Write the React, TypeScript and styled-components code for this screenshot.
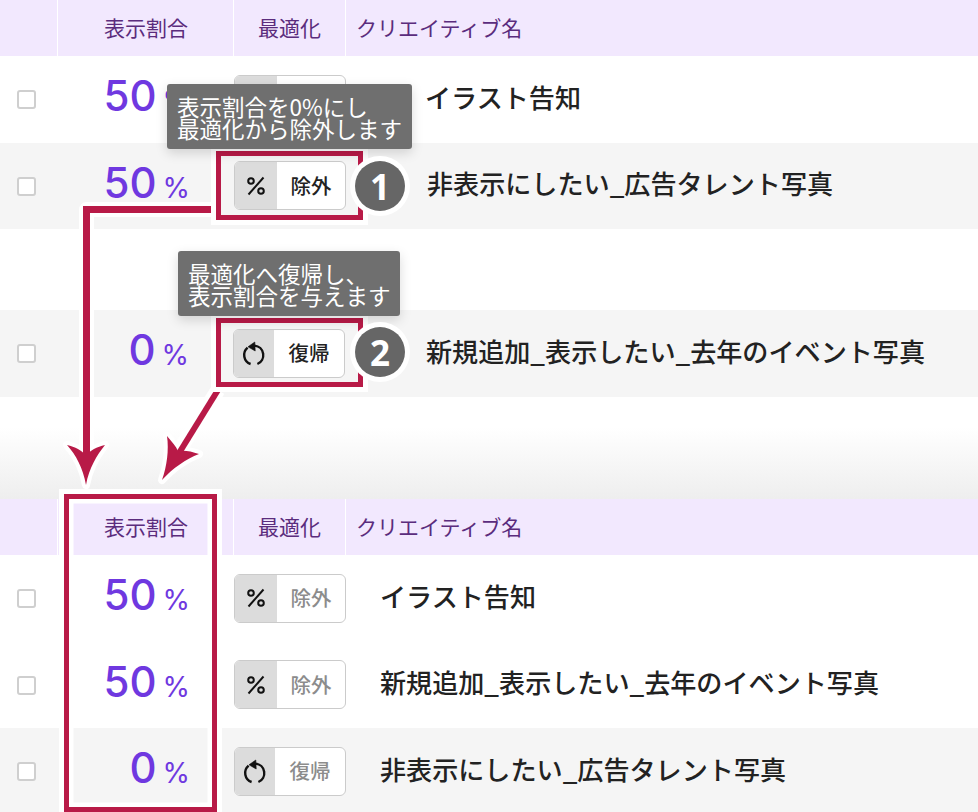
import styled, { createGlobalStyle } from "styled-components";

const Global = createGlobalStyle`
  html, body { margin: 0; padding: 0; background: #fff; }
  body { font-family: "Noto Sans CJK JP", "Noto Sans", sans-serif; }
`;

const Page = styled.div`
  position: relative;
  width: 978px;
  height: 812px;
  overflow: hidden;
  background: #fff;
`;

const HeaderRow = styled.div`
  display: grid;
  grid-template-columns: 57px 176px 112px 1fr;
  height: 56px;
  background: #f2e8fe;
`;

const HeaderCell = styled.div<{ $center?: boolean; $pad?: number }>`
  display: flex;
  align-items: center;
  justify-content: ${(p) => (p.$center ? "center" : "flex-start")};
  padding: 0 0 2px ${(p) => p.$pad ?? 0}px;
  border-left: 1px solid #fff;
  font-size: 21px;
  color: #5b2c7d;
  box-sizing: border-box;
`;

const Row = styled.div<{ $shaded?: boolean; $lead?: number }>`
  display: grid;
  grid-template-columns: ${(p) => p.$lead ?? 57}px 176px 112px 1fr;
  height: 86.5px;
  align-items: center;
  background: ${(p) => (p.$shaded ? "#f5f5f5" : "#fff")};
`;

const CheckCell = styled.div`
  display: flex;
  padding-left: 17px;
`;

const Check = styled.span`
  display: block;
  width: 19px;
  height: 19px;
  box-sizing: border-box;
  border: 2px solid #cfcfcf;
  border-radius: 3px;
  background: #fff;
  margin-top: 1px;
`;

const Ratio = styled.div`
  display: flex;
  justify-content: flex-end;
  align-items: baseline;
  padding: 0 43px 6px 0;
  color: #6f38e0;
  font-family: Inter, "Noto Sans", sans-serif;
`;

const RatioValue = styled.span`
  font-size: 42px;
  font-weight: 500;
  line-height: 1;
`;

const RatioUnit = styled.span`
  font-size: 28px;
  margin-left: 6px;
  line-height: 1;
`;

const Toggle = styled.div`
  display: flex;
  width: 112px;
  height: 49px;
  margin-left: 1px;
  box-sizing: border-box;
  border: 1px solid #cbcbcb;
  border-radius: 6px;
  overflow: hidden;
  background: #fff;
`;

const ToggleIcon = styled.div<{ $wide?: number }>`
  display: flex;
  align-items: center;
  justify-content: center;
  width: ${(p) => p.$wide ?? 42}px;
  background: #dcdcdc;
`;

const ToggleLabel = styled.div<{ $active?: boolean }>`
  flex: 1;
  display: flex;
  align-items: center;
  justify-content: center;
  padding-bottom: 2px;
  font-size: 20.5px;
  font-weight: 500;
  color: ${(p) => (p.$active ? "#222" : "#8c8c8c")};
`;

const Name = styled.div<{ $indent: number }>`
  padding: 0 0 5px ${(p) => p.$indent}px;
  font-size: 26.1px;
  font-weight: 500;
  color: #222;
  white-space: nowrap;
`;

const Spacer = styled.div<{ $height: number; $fade?: boolean }>`
  height: ${(p) => p.$height}px;
  background: ${(p) =>
    p.$fade ? "linear-gradient(#fff 30%, #eeeeee 100%)" : "#fff"};
`;

const Arrows = styled.svg`
  position: absolute;
  left: 0;
  top: 0;
`;

const Frame = styled.div<{ $x: number; $y: number; $w: number; $h: number; $ring: number }>`
  position: absolute;
  left: ${(p) => p.$x}px;
  top: ${(p) => p.$y}px;
  width: ${(p) => p.$w}px;
  height: ${(p) => p.$h}px;
  box-sizing: border-box;
  border: 5px solid #b81a47;
  box-shadow: 0 0 0 5px #fff, inset 0 0 0 ${(p) => p.$ring}px #fff;
`;

const Bubble = styled.div<{ $x: number; $y: number; $w: number }>`
  position: absolute;
  left: ${(p) => p.$x}px;
  top: ${(p) => p.$y}px;
  width: ${(p) => p.$w}px;
  height: 65px;
  box-sizing: border-box;
  padding: 12px 0 0 10px;
  border-radius: 3px;
  background: #6f6f6f;
  color: #fff;
  font-size: 22.5px;
  line-height: 21.5px;
  white-space: nowrap;
  box-shadow: 0 4px 12px rgba(0, 0, 0, 0.15);
`;

const Badge = styled.div<{ $x: number; $y: number }>`
  position: absolute;
  left: ${(p) => p.$x}px;
  top: ${(p) => p.$y}px;
  width: 50px;
  height: 50px;
  display: flex;
  align-items: center;
  justify-content: center;
  border-radius: 50%;
  background: #666;
  box-shadow: 0 0 0 5px #fff;
  color: #fff;
  font-family: "Noto Sans", sans-serif;
  font-size: 35px;
  font-weight: 700;
  line-height: 1;
`;

function PercentIcon() {
  return (
    <svg width="20" height="20" viewBox="0 0 20 20" fill="none" stroke="#111" strokeWidth="2">
      <circle cx="5" cy="5" r="2.8" />
      <circle cx="15" cy="15" r="2.8" />
      <path d="M17.5 1.5 2.5 18.5" />
    </svg>
  );
}

function ResetIcon() {
  return (
    <svg width="24" height="26" viewBox="0 0 24 26" fill="none" stroke="#111" strokeWidth="2.4">
      <path d="M12.6 5.6A9.6 9.6 0 0 1 15.4 24" />
      <path d="M8.6 24A9.6 9.6 0 0 1 5.6 7.6" />
      <path d="M6 6.8 12.8 2 13.2 11Z" fill="#111" strokeWidth="0.6" />
    </svg>
  );
}

type Item = {
  value: number;
  restore?: boolean;
  active?: boolean;
  name: string;
  shaded?: boolean;
  indent: number;
  lead?: number;
};

const topRows: Item[] = [
  { value: 50, name: "イラスト告知", indent: 80 },
  { value: 50, name: "非表示にしたい_広告タレント写真", shaded: true, active: true, indent: 82 },
];
const topRestore: Item = {
  value: 0,
  restore: true,
  active: true,
  name: "新規追加_表示したい_去年のイベント写真",
  shaded: true,
  indent: 82,
  lead: 56,
};
const bottomRows: Item[] = [
  { value: 50, name: "イラスト告知", indent: 35 },
  { value: 50, name: "新規追加_表示したい_去年のイベント写真", indent: 35 },
  { value: 0, restore: true, name: "非表示にしたい_広告タレント写真", shaded: true, indent: 35 },
];

function TableHeader() {
  return (
    <HeaderRow>
      <div />
      <HeaderCell $pad={46}>表示割合</HeaderCell>
      <HeaderCell $center>最適化</HeaderCell>
      <HeaderCell $pad={10}>クリエイティブ名</HeaderCell>
    </HeaderRow>
  );
}

function TableRow({ item }: { item: Item }) {
  return (
    <Row $shaded={item.shaded} $lead={item.lead}>
      <CheckCell>
        <Check />
      </CheckCell>
      <Ratio>
        <RatioValue>{item.value}</RatioValue>
        <RatioUnit>%</RatioUnit>
      </Ratio>
      <Toggle>
        <ToggleIcon $wide={item.restore ? 40 : 42}>
          {item.restore ? <ResetIcon /> : <PercentIcon />}
        </ToggleIcon>
        <ToggleLabel $active={item.active}>{item.restore ? "復帰" : "除外"}</ToggleLabel>
      </Toggle>
      <Name $indent={item.indent}>{item.name}</Name>
    </Row>
  );
}

export default function App() {
  return (
    <Page>
      <Global />
      <TableHeader />
      {topRows.map((item) => (
        <TableRow key={item.name} item={item} />
      ))}
      <Spacer $height={81} />
      <TableRow item={topRestore} />
      <Spacer $height={102.5} $fade />
      <TableHeader />
      {bottomRows.map((item) => (
        <TableRow key={item.name} item={item} />
      ))}

      <Arrows width="978" height="812" viewBox="0 0 978 812" fill="none">
        <g stroke="#fff" strokeWidth="15" strokeLinejoin="round">
          <path d="M214 209.5H86.5V452" />
          <path d="M218 390 178 452" />
        </g>
        <g fill="#fff" stroke="#fff" strokeWidth="8" strokeLinejoin="round">
          <path d="M86 485 C83 468 76 455 67 445 C75 447 82 450 86 456 C90 450 97 447 105 445 C97 455 89 468 86 485Z" />
          <path d="M162 480 C167 466 169 450 167 436 C172 442 176 446 178 451 C184 450 191 451 199 454 C186 459 173 468 162 480Z" />
        </g>
        <g stroke="#b81a47" strokeWidth="7">
          <path d="M214 209.5H86.5V458" />
          <path d="M218 390 176 458" strokeWidth="6" />
        </g>
        <g fill="#b81a47">
          <path d="M86 485 C83 468 76 455 67 445 C75 447 82 450 86 456 C90 450 97 447 105 445 C97 455 89 468 86 485Z" />
          <path d="M162 480 C167 466 169 450 167 436 C172 442 176 446 178 451 C184 450 191 451 199 454 C186 459 173 468 162 480Z" />
        </g>
      </Arrows>

      <Frame $x={216} $y={151} $w={147} $h={69} $ring={0} />
      <Frame $x={216} $y={318} $w={147} $h={69} $ring={0} />
      <Frame $x={64} $y={494} $w={153} $h={318} $ring={4.5} />

      <Bubble $x={167} $y={84} $w={245}>
        表示割合を0%にし
        <br />
        最適化から除外します
      </Bubble>
      <Bubble $x={178} $y={251} $w={222}>
        最適化へ復帰し、
        <br />
        表示割合を与えます
      </Bubble>
      <Badge $x={355} $y={161}>1</Badge>
      <Badge $x={355} $y={327}>2</Badge>
    </Page>
  );
}
